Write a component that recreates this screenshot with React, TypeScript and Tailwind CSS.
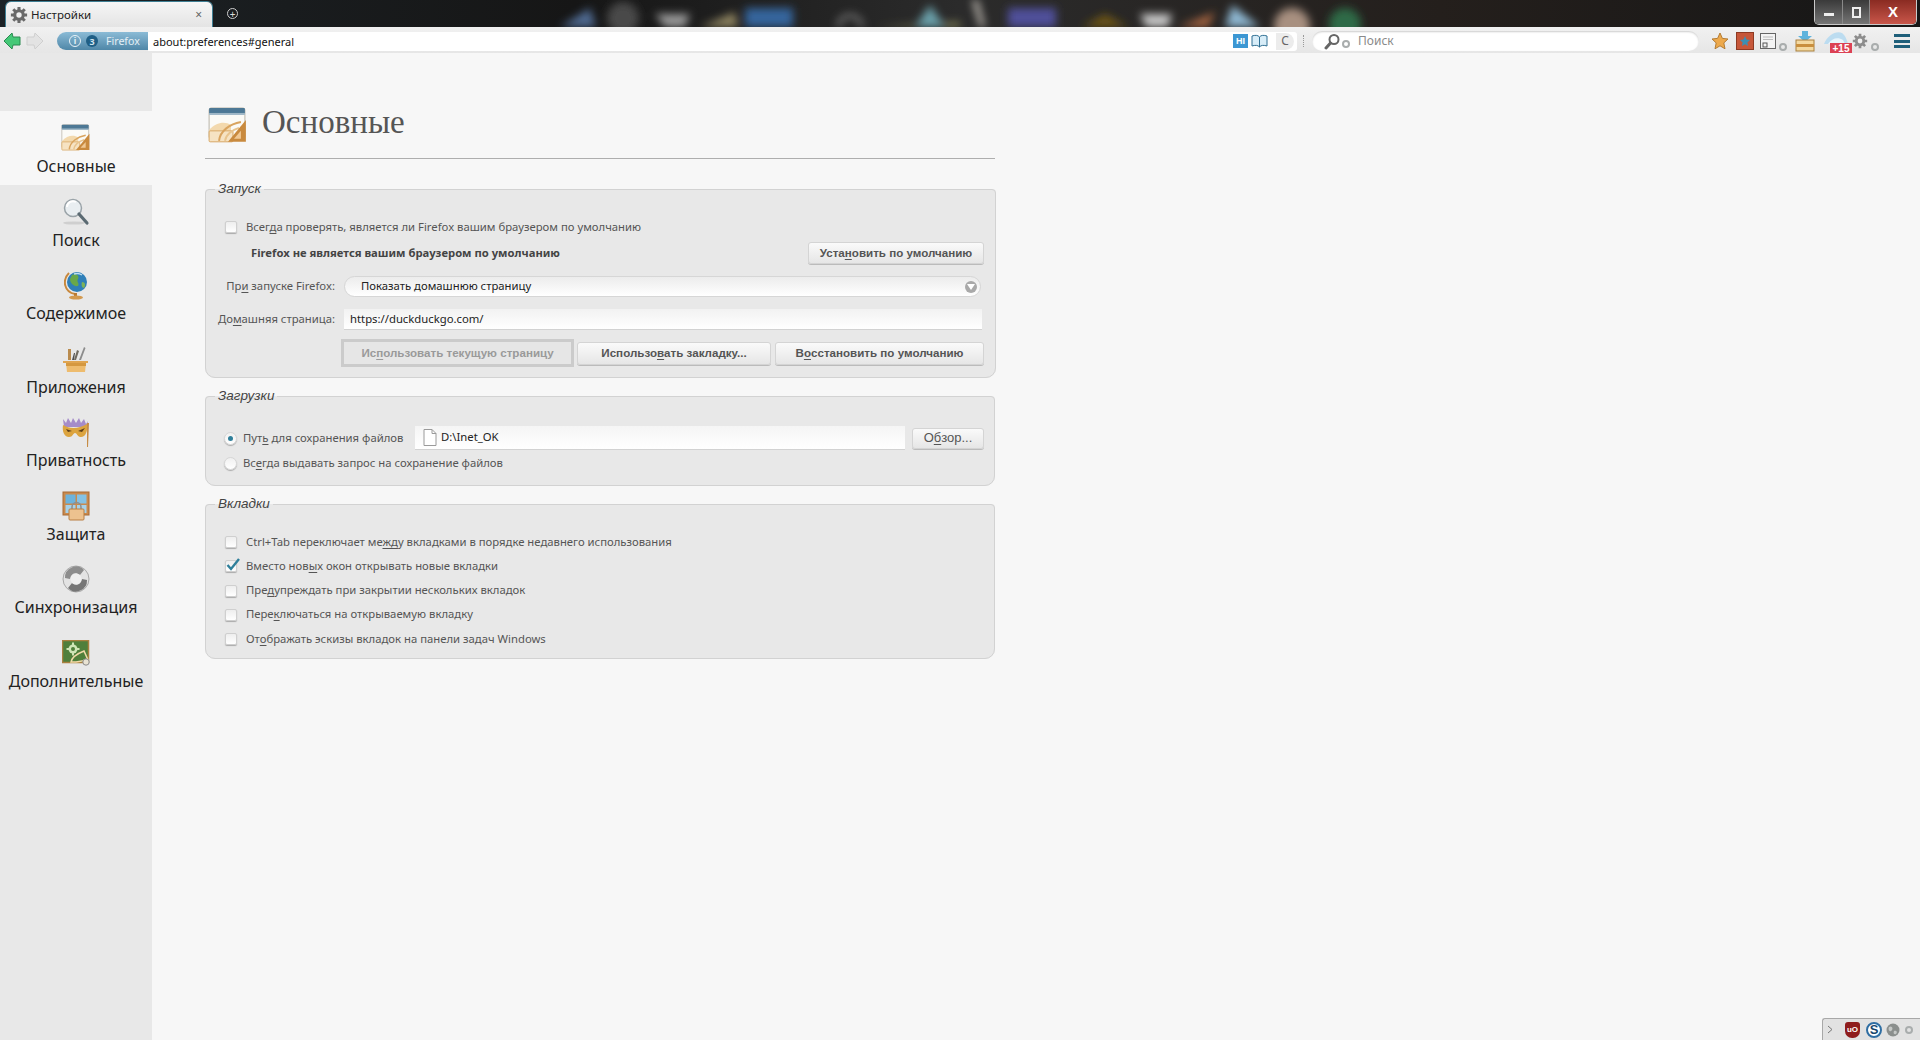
import type { ReactNode } from 'react'

const ui = 'font-["Noto_Sans","Liberation_Sans",sans-serif]'
const arial = 'font-["Liberation_Sans",Arial,sans-serif]'

function U({ children }: { children: ReactNode }) {
  return <span className="underline underline-offset-2">{children}</span>
}

function GeneralIcon({ size = 30 }: { size?: number }) {
  return (
    <svg width={size} height={size * 0.92} viewBox="0 0 40 37">
      <rect x="1" y="1" width="36" height="31" rx="2" fill="#fbfaf6" stroke="#b9b4a8" />
      <rect x="1" y="1" width="36" height="6" rx="1" fill="#4d7895" />
      <rect x="1" y="6" width="36" height="2" fill="#9fb7c6" />
      <path d="M1 23 C8 15 17 14 23 18 L23 32 L1 32 Z" fill="#f3d9ad" />
      <rect x="1" y="24" width="24" height="11" rx="1" fill="#f6e3c3" stroke="#d8a765" />
      <path d="M11 34 C12 24 22 17 33 15" fill="none" stroke="#d9a45f" strokeWidth="2" />
      <path d="M17 34 C18 28 24 23 31 21" fill="none" stroke="#e8c48e" strokeWidth="2" />
      <path d="M38 13 L38 35 L20 35 Z" fill="#c98a3e" />
      <path d="M33 24 L33 32 L26 32 Z" fill="#f0c894" />
    </svg>
  )
}

function SearchIcon() {
  return (
    <svg width="30" height="28" viewBox="0 0 30 28">
      <ellipse cx="13" cy="25" rx="11" ry="1.6" fill="#cfcfcf" />
      <circle cx="12" cy="10" r="8.5" fill="#e9eef1" stroke="#9aa3a8" strokeWidth="1.5" />
      <path d="M6 9 A6 6 0 0 1 15 4" fill="none" stroke="#fff" strokeWidth="2" />
      <path d="M18 16 L26 25" stroke="#5b6a72" strokeWidth="3.2" strokeLinecap="round" />
    </svg>
  )
}

function GlobeIcon() {
  return (
    <svg width="24" height="30" viewBox="0 0 24 30">
      <path d="M5 3 C-2 10 0 22 11 24" fill="none" stroke="#c8883c" strokeWidth="2" />
      <circle cx="13" cy="12" r="10" fill="#2f7fb8" />
      <path d="M8 5 C12 3 16 6 14 9 C12 12 16 13 14 16 C10 17 6 13 6 9 Z" fill="#69a84a" />
      <path d="M18 12 C21 12 22 15 20 18 C18 18 17 15 18 12 Z" fill="#7eb357" />
      <path d="M10 4 A9 9 0 0 1 18 5" fill="none" stroke="#bfe0f2" strokeWidth="1.5" />
      <rect x="10" y="23" width="3" height="3" fill="#b97a33" />
      <ellipse cx="12" cy="27.5" rx="7" ry="2" fill="#d39a50" />
    </svg>
  )
}

function AppsIcon() {
  return (
    <svg width="26" height="28" viewBox="0 0 26 28">
      <path d="M5 15 L5 4 L8 4 L8 15 Z" fill="#b98b4e" />
      <path d="M11 15 L14 5 L16 6 L13 15 Z" fill="#6f6a60" />
      <path d="M16 15 L21 2 L22.5 3 L18 15 Z" fill="#8c8c8c" />
      <path d="M9 15 L11 8 L12 8 L11 15 Z" fill="#4f4f4f" />
      <path d="M0 16 L25 16 L25 18 L0 18 Z" fill="#e0a550" />
      <path d="M3 18 L23 18 L22 27 L4 27 Z" fill="#eebc6e" />
      <path d="M3 18 L23 18 L23 21 L3 21 Z" fill="#d5983f" />
    </svg>
  )
}

function MaskIcon() {
  return (
    <svg width="30" height="30" viewBox="0 0 30 30">
      <path d="M2 2 L5 6 L7 1 L10 6 L12 1 L15 6 L18 1 L20 6 L23 2 L25 7 L27 4 L26 10 L3 10 Z" fill="#a58cc9" />
      <path d="M2 8 C9 12 17 12 26 7 C27 15 24 21 19 20 C16 19 16 16 14 16 C12 16 12 20 8 20 C3 20 1 14 2 8 Z" fill="#dca43f" />
      <path d="M5 12 L11 14 L7 15 Z M17 14 L24 11 L21 15 Z" fill="#5d3f18" />
      <path d="M26 6 L28 6 L27 30 L26 30 Z" fill="#c68c45" />
    </svg>
  )
}

function WindowIcon() {
  return (
    <svg width="28" height="30" viewBox="0 0 28 30">
      <rect x="1" y="1" width="26" height="23" fill="#c98a4e" stroke="#a86a34" />
      <rect x="3.5" y="3.5" width="10" height="9" fill="#6db3dc" />
      <rect x="15" y="3.5" width="9.5" height="9" fill="#85c2e4" />
      <rect x="3.5" y="14" width="10" height="8" fill="#a7d2ea" />
      <rect x="15" y="14" width="9.5" height="8" fill="#a7d2ea" />
      <path d="M10 19 V16 A4.5 4.5 0 0 1 19 16 V19" fill="none" stroke="#8e8e8e" strokeWidth="1.5" />
      <rect x="7" y="18" width="15" height="11" rx="1" fill="#edc28f" stroke="#b97e42" />
    </svg>
  )
}

function SyncIcon() {
  return (
    <svg width="30" height="30" viewBox="0 0 30 30">
      <circle cx="15" cy="15" r="13" fill="#e3e3e3" stroke="#a8a8a8" />
      <path d="M4 14 A11 11 0 0 1 23 6 L19 11 C15 8 10 9 9 15 Z" fill="#8d8d8d" />
      <path d="M26 16 A11 11 0 0 1 7 24 L11 19 C15 22 20 21 21 15 Z" fill="#767676" />
      <circle cx="15" cy="15" r="5.5" fill="#efefef" />
    </svg>
  )
}

function AdvancedIcon() {
  return (
    <svg width="28" height="26" viewBox="0 0 28 26">
      <rect x="0.5" y="0.5" width="26" height="22" fill="#4f7f3b" stroke="#a9803f" strokeWidth="1.5" />
      <g fill="#cfe5b7">
        <circle cx="11" cy="9" r="4.5" />
        <rect x="10" y="2.5" width="2" height="13" />
        <rect x="4.5" y="8" width="13" height="2" />
      </g>
      <circle cx="11" cy="9" r="2" fill="#4f7f3b" />
      <path d="M9 22 C10 16 17 13 22 11 L26 20 L14 22 Z" fill="none" stroke="#f0d9a8" strokeWidth="1.5" />
      <circle cx="24" cy="22" r="3.2" fill="#e9e3d3" stroke="#8a8a8a" />
    </svg>
  )
}

function Gear({ size, color }: { size: number; color: string }) {
  return (
    <svg width={size} height={size} viewBox="0 0 20 20">
      <g stroke={color} strokeWidth="3.4">
        <path d="M10 1 V19 M1 10 H19 M3.6 3.6 L16.4 16.4 M16.4 3.6 L3.6 16.4" />
      </g>
      <circle cx="10" cy="10" r="6.5" fill={color} />
      <circle cx="10" cy="10" r="3" fill="#f0f0f0" />
    </svg>
  )
}

function Dot({ className = '' }: { className?: string }) {
  return <span className={'block w-2 h-2 shrink-0 rounded-full border-2 border-[#a9adad] ' + className}></span>
}

function Wallpaper() {
  return (
    <svg className="absolute inset-0" width="1920" height="27" viewBox="0 0 1920 27">
      <defs>
        <filter id="soft" x="-30%" y="-30%" width="160%" height="160%">
          <feGaussianBlur stdDeviation="4" />
        </filter>
        <linearGradient id="wall" x1="0" x2="1" y1="0" y2="0">
          <stop offset="0" stopColor="#1c2226" />
          <stop offset="0.3" stopColor="#161616" />
          <stop offset="0.5" stopColor="#2b2b2b" />
          <stop offset="0.75" stopColor="#241f1c" />
          <stop offset="1" stopColor="#161616" />
        </linearGradient>
      </defs>
      <rect width="1920" height="27" fill="url(#wall)" />
      <g filter="url(#soft)">
        <path d="M560 27 L590 8 L596 27 Z" fill="#4f6a92" />
        <circle cx="623" cy="18" r="16" fill="#4a4a4a" />
        <path d="M655 14 L690 14 L685 27 L665 27 Z" fill="#9a9a9a" />
        <path d="M700 27 L735 12 L738 27 Z" fill="#8f8460" />
        <rect x="745" y="8" width="48" height="19" fill="#35659c" />
        <path d="M838 27 C840 12 860 12 862 27" fill="none" stroke="#777" strokeWidth="4" />
        <path d="M875 27 L960 22 L960 27 Z" fill="#8b8a5c" />
        <path d="M915 27 L930 5 L945 27 Z" fill="#6aa0aa" />
        <path d="M972 0 L978 0 L985 27 L980 27 Z" fill="#bdb8b0" />
        <rect x="1008" y="8" width="48" height="19" fill="#4f4f9a" />
        <path d="M1082 27 L1105 14 L1128 27 Z" fill="#6d5518" />
        <path d="M1140 14 L1172 14 L1168 27 L1146 27 Z" fill="#c9c9c9" />
        <path d="M1178 27 L1215 12 L1208 27 Z" fill="#a46341" />
        <path d="M1225 27 L1232 5 L1260 27 Z" fill="#8eb7d2" />
        <circle cx="1292" cy="26" r="18" fill="#a89080" />
        <circle cx="1345" cy="24" r="16" fill="#2e6a46" />
      </g>
    </svg>
  )
}

function TitleBar() {
  return (
    <div className="relative flex h-[27px] overflow-hidden bg-[#161616]">
      <Wallpaper />
      <div className="relative ml-[6px] mt-[2px] flex h-[25px] w-[206px] items-center rounded-t-[5px] bg-gradient-to-b from-[#f6f6f6] to-[#e4e4e4] pl-[4px] pr-[10px] shadow-[0_0_0_1px_#3f7f94]">
        <Gear size={18} color="#6a6a6a" />
        <span className={ui + ' ml-[3px] text-[11.5px] text-[#222]'}>Настройки</span>
        <span className={ui + ' ml-auto text-[12px] leading-none text-[#666]'}>×</span>
      </div>
      <div className="relative ml-[15px] mt-[8px] flex h-[11px] w-[11px] items-center justify-center rounded-full border border-[#cfcfcf] text-[10px] leading-none text-[#dcdcdc]">
        +
      </div>
      <div className="relative ml-auto mr-[3px] flex h-[25px] w-[103px] overflow-hidden rounded-b-[5px] border border-t-0 border-[#c9c9c9]">
        <div className="flex w-[28px] items-center justify-center border-r border-[#8a8a8a] bg-gradient-to-b from-[#3a3a3a] to-[#767676]">
          <span className="mt-[4px] h-[3px] w-[10px] bg-[#eee]"></span>
        </div>
        <div className="flex w-[27px] items-center justify-center border-r border-[#8a8a8a] bg-gradient-to-b from-[#3a3a3a] to-[#767676]">
          <span className="h-[11px] w-[9px] border-2 border-[#eee]"></span>
        </div>
        <div className={arial + ' flex flex-1 items-center justify-center bg-gradient-to-b from-[#8a2b22] to-[#c9564a] text-[15px] font-bold text-white'}>
          X
        </div>
      </div>
    </div>
  )
}

function NavButtons() {
  return (
    <div className="flex w-[57px] shrink-0 items-center pl-[3px]">
      <svg width="18" height="20" viewBox="0 0 18 20">
        <path d="M1 10 L9 2 L10 6 L17 6 L17 14 L10 14 L9 18 Z" fill="#45c877" stroke="#2a8a50" strokeWidth="1" />
      </svg>
      <svg className="ml-[5px]" width="18" height="20" viewBox="0 0 18 20">
        <path d="M1 6 L8 6 L9 2 L17 10 L9 18 L8 14 L1 14 Z" fill="#e3e3e3" stroke="#cfcfcf" strokeWidth="1" />
      </svg>
    </div>
  )
}

function IdentityBox() {
  return (
    <div className="flex h-[18px] w-[91px] shrink-0 items-center rounded-l-full bg-gradient-to-b from-[#8bbbd6] to-[#4f87a8] pl-[12px]">
      <span className={arial + ' flex h-[12px] w-[12px] items-center justify-center rounded-full border border-[#e8f2f7] text-[9px] font-bold leading-none text-[#e8f2f7]'}>
        i
      </span>
      <span className="ml-[5px] flex h-[12px] w-[12px] items-center justify-center rounded-full bg-[#1f5f86] text-[9px] font-bold leading-none text-[#cfe3ee]">
        3
      </span>
      <span className={ui + ' ml-[8px] text-[10.6px] leading-none text-[#e4eff5]'}>Firefox</span>
    </div>
  )
}

function RightIcons() {
  return (
    <div className="flex shrink-0 items-center">
      <svg className="ml-[12px]" width="18" height="18" viewBox="0 0 18 18">
        <path d="M9 1 L11.4 6.4 L17 7 L12.8 10.9 L14 16.8 L9 13.8 L4 16.8 L5.2 10.9 L1 7 L6.6 6.4 Z" fill="#eda94c" stroke="#b47c33" />
      </svg>
      <svg className="ml-[7px]" width="18" height="18" viewBox="0 0 18 18">
        <rect x="0.5" y="0.5" width="17" height="17" fill="#c6573a" stroke="#8e3a23" />
        <path d="M9 4 L10.5 7.5 L14 8 L11.4 10.4 L12 14 L9 12.2 L6 14 L6.6 10.4 L4 8 L7.5 7.5 Z" fill="#3b8fb4" />
      </svg>
      <svg className="ml-[6px]" width="16" height="16" viewBox="0 0 16 16">
        <rect x="0.5" y="0.5" width="15" height="15" fill="#f4f4f4" stroke="#666" />
        <path d="M3 4 H13 M3 6.5 H13" stroke="#bbb" />
        <rect x="3" y="10" width="4" height="4" fill="none" stroke="#555" />
      </svg>
      <Dot className="ml-[3px] mt-[11px]" />
      <svg className="ml-[8px]" width="20" height="21" viewBox="0 0 20 21">
        <path d="M7 0 H13 V5 H17 L10 11 L3 5 H7 Z" fill="#5fb3dc" />
        <rect x="1" y="9" width="18" height="11" fill="#f4d9a0" stroke="#a9803f" />
        <rect x="1" y="13" width="18" height="3" fill="#c98f3e" />
      </svg>
      <div className="relative ml-[8px] h-[22px] w-[28px]">
        <svg width="26" height="16" viewBox="0 0 26 16">
          <path d="M1 14 C4 5 14 0 19 3 C22 5 24 10 25 14 Z" fill="#bcdcf0" />
          <path d="M5 14 C9 8 15 7 20 10 L22 14 Z" fill="#e9f4fb" />
        </svg>
        <span className={arial + ' absolute bottom-[-1px] right-[-1px] h-[10px] w-[22px] overflow-hidden bg-[#dc4154] text-center text-[10px] font-bold leading-[11px] text-white'}>
          +15
        </span>
      </div>
      <div className="ml-[1px]">
        <Gear size={16} color="#8d8d8d" />
      </div>
      <Dot className="ml-[3px] mt-[11px]" />
      <div className="ml-[15px] flex h-[14px] w-[16px] flex-col justify-between">
        <span className="h-[3px] bg-[#1f5f7a]"></span>
        <span className="h-[3px] bg-[#1f5f7a]"></span>
        <span className="h-[3px] bg-[#1f5f7a]"></span>
      </div>
    </div>
  )
}

function NavBar() {
  return (
    <div className="flex h-[26px] items-center bg-gradient-to-b from-[#f1f1f1] to-[#e6e6e6] pr-[9px] pt-[2px]">
      <NavButtons />
      <IdentityBox />
      <div className="flex h-[19px] w-[1149px] shrink-0 items-center rounded-r-[3px] bg-white pl-[5px] pr-[3px]">
        <span className={ui + ' text-[11px] leading-none text-[#111]'}>about:preferences#general</span>
        <span className={arial + ' ml-auto flex h-[14px] w-[15px] items-center justify-center bg-[#3c97d3] text-[9px] font-bold leading-none text-white'}>
          HI
        </span>
        <svg className="ml-[3px]" width="17" height="14" viewBox="0 0 17 14">
          <path d="M1 2 C4 1 7 1 8.5 3 C10 1 13 1 16 2 V12 C13 11 10 11 8.5 13 C7 11 4 11 1 12 Z" fill="#d8edf8" stroke="#2f6f93" />
          <path d="M8.5 3 V13" stroke="#2f6f93" />
        </svg>
        <span className={ui + ' ml-[8px] flex h-[17px] w-[18px] items-center justify-center rounded-r-full bg-[#ececec] text-[12px] leading-none text-[#666]'}>
          C
        </span>
      </div>
      <div className="ml-[6px] h-[12px] w-[1px] shrink-0 border-l border-dotted border-[#999]"></div>
      <div className="ml-[8px] flex h-[20px] w-[387px] shrink-0 items-center rounded-full bg-white pl-[12px] shadow-[inset_0_1px_2px_#ccc]">
        <svg width="17" height="17" viewBox="0 0 17 17">
          <circle cx="10" cy="6.5" r="4.5" fill="none" stroke="#666" strokeWidth="2" />
          <path d="M6.5 10 L2 15" stroke="#666" strokeWidth="3" strokeLinecap="round" />
        </svg>
        <Dot className="ml-[1px] mt-[6px]" />
        <span className={ui + ' ml-[8px] text-[12px] leading-none text-[#8a8a8a]'}>Поиск</span>
      </div>
      <RightIcons />
    </div>
  )
}

const sections: { label: string; icon: ReactNode }[] = [
  { label: 'Основные', icon: <GeneralIcon /> },
  { label: 'Поиск', icon: <SearchIcon /> },
  { label: 'Содержимое', icon: <GlobeIcon /> },
  { label: 'Приложения', icon: <AppsIcon /> },
  { label: 'Приватность', icon: <MaskIcon /> },
  { label: 'Защита', icon: <WindowIcon /> },
  { label: 'Синхронизация', icon: <SyncIcon /> },
  { label: 'Дополнительные', icon: <AdvancedIcon /> },
]

function Sidebar() {
  return (
    <aside className="w-[152px] shrink-0 bg-[#e8e8e8] pt-[58px]">
      {sections.map((s, i) => (
        <div
          key={s.label}
          className={(i === 0 ? 'bg-[#f7f7f7] ' : '') + 'flex h-[73.5px] flex-col items-center pt-[12px]'}
        >
          <div className="flex h-[30px] items-center justify-center">{s.icon}</div>
          <span className={ui + ' mt-[1px] text-[16px] leading-[24px] text-[#222]'}>{s.label}</span>
        </div>
      ))}
    </aside>
  )
}

function Group({ title, children, className = '' }: { title: string; children: ReactNode; className?: string }) {
  return (
    <fieldset className={'rounded-b-[10px] rounded-t-[4px] border border-[#d2d2d2] bg-[#e8e8e8] ' + className}>
      <legend className={arial + ' ml-[9px] px-[3px] text-[13.5px] italic leading-[16px] text-[#444]'}>{title}</legend>
      {children}
    </fieldset>
  )
}

function Checkbox({ checked, children }: { checked?: boolean; children: ReactNode }) {
  return (
    <div className="flex h-[24.25px] items-center pl-[18.5px]">
      <span className="relative h-[12px] w-[12px] shrink-0 rounded-[2px] border border-[#cfcfcf] bg-gradient-to-b from-[#eeeeee] to-[#ffffff] shadow-[0_1px_1px_#aaa]">
        {checked && (
          <svg className="absolute left-[-1px] top-[-5px]" width="16" height="16" viewBox="0 0 16 16">
            <path d="M2.5 9 L6 13 L14 3" fill="none" stroke="#2f7f9a" strokeWidth="2.4" />
          </svg>
        )}
      </span>
      <span className={ui + ' ml-[9.5px] text-[11.3px] text-[#555]'}>{children}</span>
    </div>
  )
}

function Radio({ checked, children }: { checked?: boolean; children: ReactNode }) {
  return (
    <div className="flex h-full items-center pl-[18px]">
      <span className="flex h-[13px] w-[13px] shrink-0 items-center justify-center rounded-full border border-[#d6d6d6] bg-gradient-to-b from-[#f0f0f0] to-white shadow-[0_1px_1px_#aaa]">
        {checked && <span className="h-[5px] w-[5px] rounded-full bg-[#2f7f9a]"></span>}
      </span>
      <span className={ui + ' ml-[6px] whitespace-nowrap text-[11.3px] text-[#555]'}>{children}</span>
    </div>
  )
}

function Btn({ className = '', children }: { className?: string; children: ReactNode }) {
  return (
    <button className={arial + ' flex items-center justify-center rounded-[3px] border border-[#d4d4d4] bg-gradient-to-b from-[#fafafa] to-[#e6e6e6] text-[11.6px] font-bold text-[#555] shadow-[0_1px_0_#bbb] ' + className}>
      {children}
    </button>
  )
}

function Main() {
  return (
    <main className="flex-1 bg-[#f7f7f7] pl-[53px] pt-[54px]">
      <div className="w-[790px]">
        <header className="flex h-[52px] items-start border-b border-[#aeaeae] pl-[3px]">
          <GeneralIcon size={40} />
          <h1 className='ml-[14px] mt-[-6px] font-["Liberation_Serif",serif] text-[33px] leading-[42px] text-[#555]'>Основные</h1>
        </header>

        <Group title="Запуск" className="mt-[22px]">
          <div className="pb-[10px] pr-[11px] pt-[18px]">
            <div className="h-[24px]">
              <Checkbox>
                Всег<U>д</U>а проверять, является ли Firefox вашим браузером по умолчанию
              </Checkbox>
            </div>
            <div className="mt-[2px] flex h-[24px] items-center justify-between">
              <span className={ui + ' ml-[45px] text-[11.25px] font-bold text-[#444]'}>
                Firefox не является вашим браузером по умолчанию
              </span>
              <Btn className="h-[22px] w-[176px]">
                Уста<U>н</U>овить по умолчанию
              </Btn>
            </div>
            <div className="mt-[11px] flex h-[21px] items-center">
              <label className={ui + ' w-[129px] shrink-0 text-right text-[11.3px] text-[#555]'}>
                Пр<U>и</U> запуске Firefox:
              </label>
              <div className="ml-[9px] flex h-[21px] w-[637px] items-center rounded-full border border-[#d6d6d6] bg-gradient-to-b from-[#ececec] to-white pl-[16px] pr-[3px]">
                <span className={ui + ' text-[11.3px] text-[#222]'}>Показать домашнюю страницу</span>
                <span className="ml-auto flex h-[12px] w-[12px] items-center justify-center rounded-full bg-[#a9a9a9]">
                  <svg width="8" height="6" viewBox="0 0 8 6">
                    <path d="M0 0 H8 L4 6 Z" fill="#fff" />
                  </svg>
                </span>
              </div>
            </div>
            <div className="mt-[12px] flex h-[21px] items-center">
              <label className={ui + ' w-[129px] shrink-0 text-right text-[11.3px] text-[#555]'}>
                До<U>м</U>ашняя страница:
              </label>
              <div className={ui + ' ml-[9px] flex h-[21px] w-[638px] items-center border-b border-[#d2d2d2] bg-gradient-to-b from-[#f2f2f2] to-white pl-[6px] text-[11.3px] text-[#222]'}>
                https://duckduckgo.com/
              </div>
            </div>
            <div className="ml-[135px] mt-[9px] flex h-[28px] items-center">
              <button className={arial + ' h-[28px] w-[233px] border-[3px] border-[#cbcbcb] bg-[#e6e6e6] text-[11.6px] font-bold text-[#9a9a9a]'}>
                Ис<U>п</U>ользовать текущую страницу
              </button>
              <Btn className="ml-[3px] h-[23px] w-[194px]">
                Использо<U>в</U>ать закладку...
              </Btn>
              <Btn className="ml-[4px] h-[23px] w-[209px]">
                В<U>о</U>сстановить по умолчанию
              </Btn>
            </div>
          </div>
        </Group>

        <Group title="Загрузки" className="mt-[10px]">
          <div className="pb-[12px] pr-[10px] pt-[22px]">
            <div className="flex h-[24px] items-center">
              <div className="h-full w-[209px] shrink-0">
                <Radio checked>
                  Пут<U>ь</U> для сохранения файлов
                </Radio>
              </div>
              <div className="flex h-[24px] w-[490px] items-center border-b border-[#d2d2d2] bg-gradient-to-b from-[#f5f5f5] to-white pl-[8px]">
                <svg width="14" height="17" viewBox="0 0 14 17">
                  <path d="M1 .5 H9 L13 4.5 V16.5 H1 Z" fill="#fff" stroke="#9a9a9a" />
                  <path d="M9 .5 V4.5 H13" fill="none" stroke="#9a9a9a" />
                </svg>
                <span className={ui + ' ml-[4px] text-[11.3px] text-[#222]'}>D:\Inet_OK</span>
              </div>
              <Btn className="ml-[7px] h-[21px] w-[72px] !font-normal !text-[13px]">
                О<U>б</U>зор...
              </Btn>
            </div>
            <div className="mt-[3px] h-[20px]">
              <Radio>
                Вс<U>е</U>гда выдавать запрос на сохранение файлов
              </Radio>
            </div>
          </div>
        </Group>

        <Group title="Вкладки" className="mt-[10px]">
          <div className="pb-[7px] pt-[18px]">
            <Checkbox>
              Ctrl+Tab переключает ме<U>жд</U>у вкладками в порядке недавнего использования
            </Checkbox>
            <Checkbox checked>
              Вместо нов<U>ы</U>х окон открывать новые вкладки
            </Checkbox>
            <Checkbox>
              Пре<U>д</U>упреждать при закрытии нескольких вкладок
            </Checkbox>
            <Checkbox>
              Пере<U>к</U>лючаться на открываемую вкладку
            </Checkbox>
            <Checkbox>
              От<U>о</U>бражать эскизы вкладок на панели задач Windows
            </Checkbox>
          </div>
        </Group>
      </div>
    </main>
  )
}

function StatusBar() {
  return (
    <div className="absolute bottom-0 right-0 flex h-[22px] w-[98px] items-center rounded-tl-[3px] border-l border-t border-[#a8a8a8] bg-[#e2e2e2]">
      <svg className="ml-[4px]" width="6" height="9" viewBox="0 0 6 9">
        <path d="M1 1 L5 4.5 L1 8" fill="none" stroke="#777" />
      </svg>
      <span className={arial + ' ml-[12px] flex h-[16px] w-[15px] items-center justify-center rounded-b-[7px] rounded-t-[3px] bg-[#8f1d1d] text-[8px] font-bold leading-none text-white'}>
        uO
      </span>
      <span className={arial + ' ml-[6px] flex h-[16px] w-[16px] items-center justify-center rounded-full border-2 border-[#2f6ea3] bg-white text-[13px] font-bold leading-none text-[#17466e]'}>
        S
      </span>
      <svg className="ml-[4px]" width="14" height="14" viewBox="0 0 14 14">
        <circle cx="7" cy="7" r="6.5" fill="#8b8f8d" />
        <path d="M3 4 C6 2 8 6 5 8 C3 9 2 6 3 4 Z M8 8 C10 7 12 9 10 11 C8 12 7 10 8 8 Z" fill="#c5c8c6" />
      </svg>
      <Dot className="ml-[5px]" />
    </div>
  )
}

export default function App() {
  return (
    <div className="relative flex h-[1040px] w-[1920px] flex-col overflow-hidden bg-[#f7f7f7]">
      <TitleBar />
      <NavBar />
      <div className="flex flex-1">
        <Sidebar />
        <Main />
      </div>
      <StatusBar />
    </div>
  )
}
